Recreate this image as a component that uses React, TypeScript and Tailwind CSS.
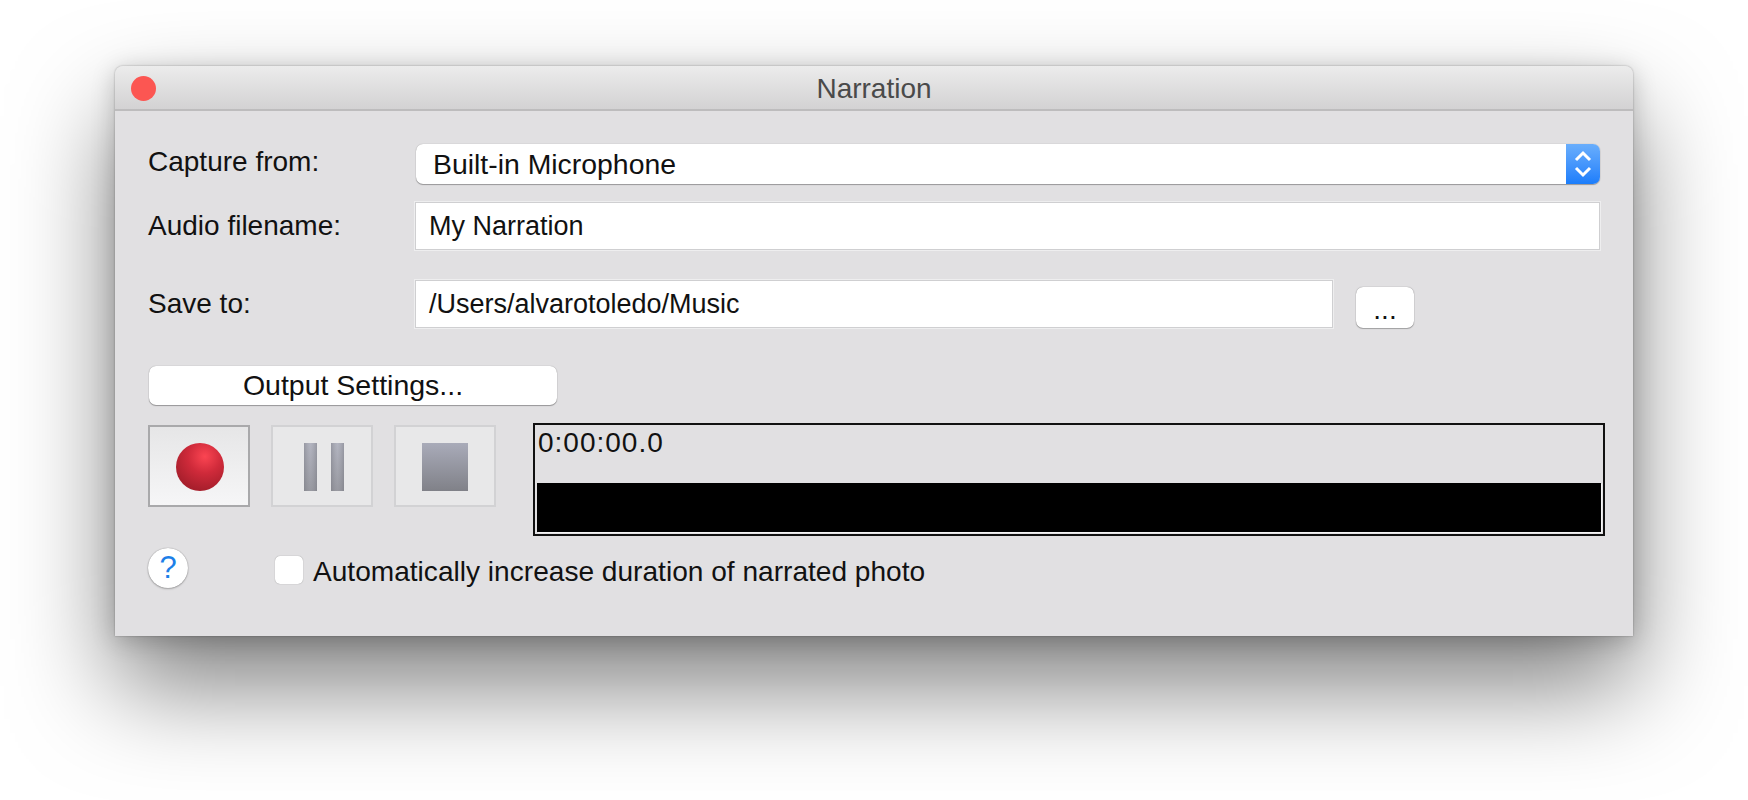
const sans = "font-['Liberation_Sans',Arial,sans-serif]";

function Label({ children, className = "" }: { children: string; className?: string }) {
  return <div className={`w-[267px] shrink-0 text-[28px] leading-[32px] text-[#111] ${className}`}>{children}</div>;
}

function TextField({ value, className }: { value: string; className: string }) {
  return (
    <div className={`flex h-[48px] items-center border border-[#cfcfd1] bg-white pl-[13px] text-[27px] text-[#111] shadow-[0_0_0_1px_rgba(255,255,255,0.45)] ${className}`}>
      {value}
    </div>
  );
}

function TransportButton({ active, children }: { active?: boolean; children: React.ReactNode }) {
  return (
    <div
      className={`flex h-[82px] w-[102px] items-center justify-center pt-[2px] ${
        active
          ? "border-2 border-[#a9a9ab] bg-gradient-to-b from-[#e6e6e7] to-[#f6f6f7]"
          : "border-2 border-[#d2d2d4] bg-[#e8e8e9]"
      }`}
    >
      {children}
    </div>
  );
}

export default function App() {
  return (
    <div className={`h-[800px] w-[1748px] overflow-hidden bg-white pl-[115px] pt-[66px] ${sans}`}>
      <div className="flex h-[570px] w-[1518px] flex-col rounded-t-[8px] bg-[#e1e0e2] shadow-[0_0_2px_rgba(0,0,0,0.35),0_4px_25px_rgba(0,0,0,0.2),0_50px_100px_rgba(0,0,0,0.5)]">
        <div className="relative flex h-[45px] shrink-0 items-center justify-center rounded-t-[8px] border-b-2 border-[#bdbcbd] bg-gradient-to-b from-[#ececec] to-[#d3d2d3]">
          <div className="absolute left-[16px] top-[10px] h-[25px] w-[25px] rounded-full bg-[#fc5652]" />
          <span className="pt-[2px] text-[28px] text-[#4a4a4a]">Narration</span>
        </div>

        <div className="flex flex-col pl-[33px] pr-[33px]">
          <div className="mt-[33px] flex h-[40px] items-start">
            <Label className="pt-[2px]">Capture from:</Label>
            <div className="ml-[1px] flex h-[40px] flex-1 rounded-[7px] bg-white shadow-[0_0_1px_rgba(0,0,0,0.35),0_1px_1px_rgba(0,0,0,0.3)]">
              <div className="flex-1 pl-[17px] text-[28.4px] leading-[40px] text-[#111]">Built-in Microphone</div>
              <div className="flex w-[34px] items-center justify-center rounded-r-[7px] bg-gradient-to-b from-[#69aefc] to-[#1a7dfb]">
                <svg width="18" height="28" viewBox="0 0 18 28" fill="none" stroke="white" strokeWidth="3">
                  <path d="M2 10 L9 3 L16 10" />
                  <path d="M2 18 L9 25 L16 18" />
                </svg>
              </div>
            </div>
          </div>

          <div className="mt-[18px] flex h-[48px] items-center">
            <Label>Audio filename:</Label>
            <TextField value="My Narration" className="flex-1" />
          </div>

          <div className="mt-[30px] flex h-[48px] items-center">
            <Label>Save to:</Label>
            <TextField value="/Users/alvarotoledo/Music" className="w-[918px]" />
            <div className="ml-[23px] mt-[7px] flex h-[41px] w-[58px] items-center justify-center rounded-[7px] bg-white pt-[4px] text-[28px] text-[#111] shadow-[0_0_1px_rgba(0,0,0,0.5),0_1px_1px_rgba(0,0,0,0.25)]">
              ...
            </div>
          </div>

          <div className="ml-[1px] mt-[38px] flex h-[39px] w-[408px] items-center justify-center rounded-[7px] bg-white text-[28.5px] text-[#111] shadow-[0_0_1px_rgba(0,0,0,0.4),0_1px_1px_rgba(0,0,0,0.3)]">
            Output Settings...
          </div>

          <div className="mt-[18px] flex h-[113px] items-start">
            <div className="mt-[2px] flex gap-[21px]">
              <TransportButton active>
                <svg width="50" height="50" viewBox="0 0 50 50">
                  <defs>
                    <radialGradient id="rec" cx="60%" cy="28%" r="70%">
                      <stop offset="0%" stopColor="#fb4552" />
                      <stop offset="50%" stopColor="#cf2a3a" />
                      <stop offset="100%" stopColor="#a81f2c" />
                    </radialGradient>
                  </defs>
                  <circle cx="26" cy="25" r="24" fill="url(#rec)" />
                </svg>
              </TransportButton>
              <TransportButton>
                <svg width="50" height="48" viewBox="0 0 50 48">
                  <defs>
                    <linearGradient id="gr" x1="0" y1="0" x2="0" y2="1">
                      <stop offset="0%" stopColor="#a9abb9" />
                      <stop offset="100%" stopColor="#808188" />
                    </linearGradient>
                    <linearGradient id="edge" x1="0" y1="0" x2="1" y2="0">
                      <stop offset="0%" stopColor="#8a8b93" stopOpacity="0.6" />
                      <stop offset="50%" stopColor="#c5c6ce" stopOpacity="0.35" />
                      <stop offset="100%" stopColor="#8a8b93" stopOpacity="0.6" />
                    </linearGradient>
                  </defs>
                  <rect x="7" y="0" width="13" height="48" fill="url(#gr)" />
                  <rect x="7" y="0" width="13" height="48" fill="url(#edge)" />
                  <rect x="34" y="0" width="13" height="48" fill="url(#gr)" />
                  <rect x="34" y="0" width="13" height="48" fill="url(#edge)" />
                </svg>
              </TransportButton>
              <TransportButton>
                <svg width="48" height="48" viewBox="0 0 48 48">
                  <defs>
                    <linearGradient id="gs" x1="0" y1="0" x2="0" y2="1">
                      <stop offset="0%" stopColor="#a9abb9" />
                      <stop offset="100%" stopColor="#808188" />
                    </linearGradient>
                  </defs>
                  <rect x="1" width="46" height="48" fill="url(#gs)" />
                </svg>
              </TransportButton>
            </div>
            <div className="-mr-[5px] ml-[37px] flex h-[113px] flex-1 flex-col border-2 border-[#111] p-[2px]">
              <div className="h-[56px] pl-[1px] text-[28px] leading-[32px] tracking-[1px] text-[#111]">0:00:00.0</div>
              <div className="flex-1 bg-black shadow-[1px_1px_0_#f4f4f5]" />
            </div>
          </div>

          <div className="mt-[12px] flex h-[40px] items-center">
            <div className="flex h-[40px] w-[40px] items-center justify-center rounded-full bg-white text-[31px] font-medium text-[#1d7fe8] shadow-[0_0_1px_rgba(0,0,0,0.45),0_1px_2px_rgba(0,0,0,0.25)]">
              ?
            </div>
            <div className="ml-[87px] mt-[4px] h-[28px] w-[28px] rounded-[5px] bg-white shadow-[0_0_1px_rgba(0,0,0,0.45)]" />
            <div className="ml-[10px] mt-[8px] text-[28.1px] text-[#111]">Automatically increase duration of narrated photo</div>
          </div>
        </div>
      </div>
    </div>
  );
}
